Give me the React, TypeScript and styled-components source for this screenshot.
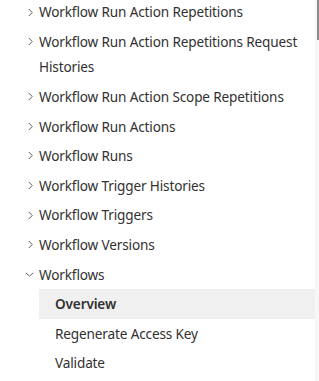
import React from "react";
import styled, { createGlobalStyle } from "styled-components";

const Global = createGlobalStyle`
  html, body { margin: 0; padding: 0; background: #ffffff; }
  body { font-family: "Noto Sans", "Open Sans", sans-serif; }
`;

const Frame = styled.div`
  width: 319px;
  height: 381px;
  display: flex;
  overflow: hidden;
  background: #ffffff;
`;

const List = styled.ul`
  flex: 1;
  list-style: none;
  margin: -2.8px 0 0 0;
  padding: 0 0 0 25px;
  display: flex;
  flex-direction: column;
`;

const Row = styled.li<{ $child?: boolean; $selected?: boolean }>`
  display: flex;
  align-items: flex-start;
  padding: 2px 0;
  padding-left: ${(p) => (p.$child ? "16px" : "0")};
  margin-left: ${(p) => (p.$child ? "14px" : "0")};
  background: ${(p) => (p.$selected ? "#f0f0f0" : "transparent")};
  font-size: 13.6px;
  letter-spacing: -0.15px;
  line-height: 25.6px;
  color: #323130;
  font-weight: ${(p) => (p.$selected ? 600 : 400)};
`;

const Chevron = styled.span<{ $open?: boolean }>`
  width: 9px;
  margin-right: 5px;
  height: 25.6px;
  flex: none;
  display: flex;
  align-items: center;
  justify-content: ${(p) => (p.$open ? "flex-start" : "flex-end")};
  padding-right: ${(p) => (p.$open ? "0" : "1px")};
  box-sizing: border-box;
  color: #605e5c;
`;

const Label = styled.span`
  flex: 1;
`;

const Scrollbar = styled.div`
  width: 4px;
  flex: none;
  background: #f7f7f7;
  display: flex;
  flex-direction: column;
`;

const Thumb = styled.div`
  width: 2px;
  margin-left: 2px;
  height: 40px;
  background: #8a8a8a;
`;

const Right = () => (
  <svg width="5" height="9" viewBox="0 0 5 9" fill="none">
    <path d="M0.8 1 L4.2 4.5 L0.8 8" stroke="currentColor" strokeWidth="1" />
  </svg>
);

const Down = () => (
  <svg width="9" height="5" viewBox="0 0 9 5" fill="none">
    <path d="M0.8 0.8 L4.5 4.2 L8.2 0.8" stroke="currentColor" strokeWidth="1" />
  </svg>
);

const items = [
  "Workflow Run Action Repetitions",
  "Workflow Run Action Repetitions Request Histories",
  "Workflow Run Action Scope Repetitions",
  "Workflow Run Actions",
  "Workflow Runs",
  "Workflow Trigger Histories",
  "Workflow Triggers",
  "Workflow Versions",
];

export default function App() {
  return (
    <>
      <Global />
      <Frame>
        <List>
          {items.map((t) => (
            <Row key={t}>
              <Chevron>
                <Right />
              </Chevron>
              <Label>{t}</Label>
            </Row>
          ))}
          <Row>
            <Chevron $open>
              <Down />
            </Chevron>
            <Label>Workflows</Label>
          </Row>
          <Row $child $selected>
            <Label>Overview</Label>
          </Row>
          <Row $child>
            <Label>Regenerate Access Key</Label>
          </Row>
          <Row $child>
            <Label>Validate</Label>
          </Row>
        </List>
        <Scrollbar>
          <Thumb />
        </Scrollbar>
      </Frame>
    </>
  );
}
